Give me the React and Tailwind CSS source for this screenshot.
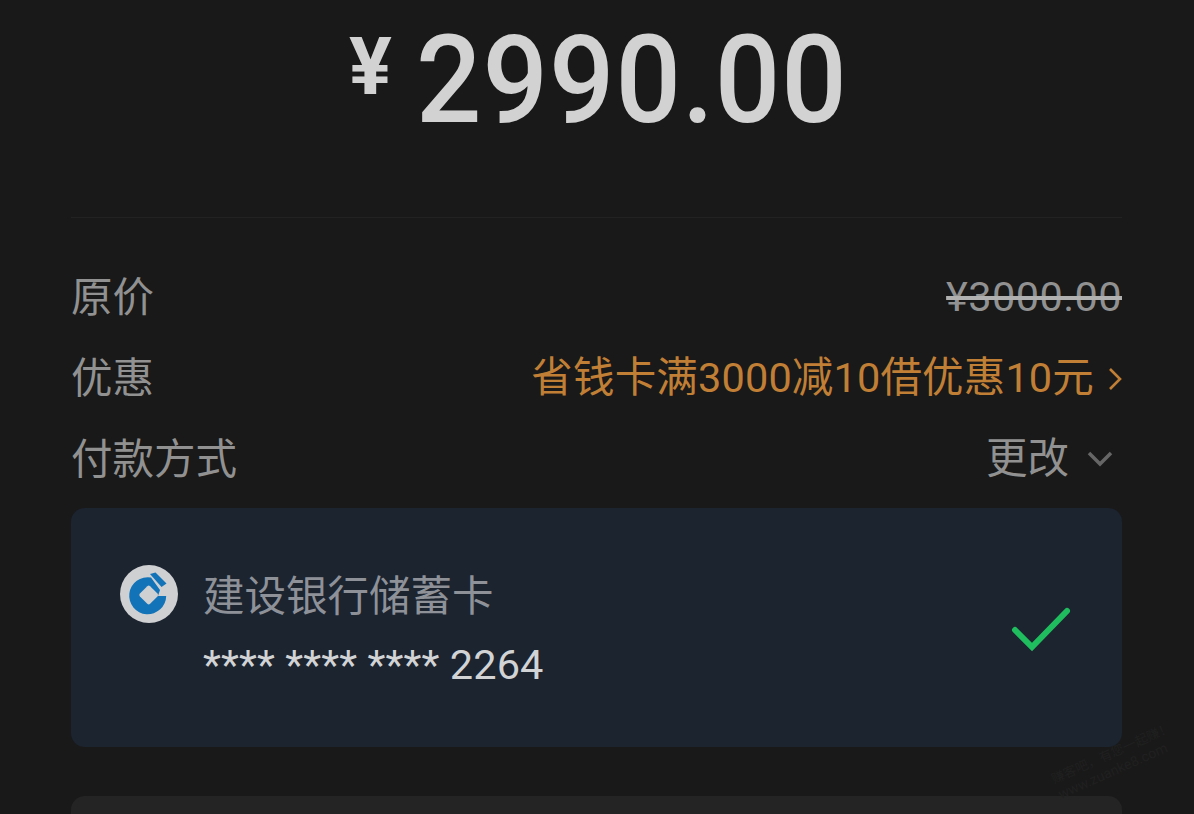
import React from "react";

const FONT = { fontFamily: '"Roboto", "Noto Sans CJK SC", sans-serif' };

function CcbLogo() {
  return (
    <svg viewBox="0 0 58 58" className="w-[58px] h-[58px] shrink-0">
      <circle cx="29" cy="29" r="29" fill="#cfd0d2" />
      <path d="M31 12.5A18.5 18.5 0 1 0 46.2 31L38 31L40 25Z" fill="#1273b8" />
      <path d="M30 9L35.5 7.5L46.5 18.5L41.5 22Z" fill="#1273b8" />
      <rect x="21.5" y="22.8" width="14.4" height="14.4" rx="2" transform="rotate(45 28.7 30)" fill="#cfd0d2" />
    </svg>
  );
}

function Row({ label, children }) {
  return (
    <div className="flex justify-between items-center h-[81px]">
      <span className="text-[41.5px] pt-[2px] text-[#919191]">{label}</span>
      {children}
    </div>
  );
}

export default function App() {
  return (
    <div
      className="relative w-[1194px] h-[814px] overflow-hidden bg-[#191919] pl-[71px] pr-[72px]"
      style={FONT}
    >
      {/* amount */}
      <div className="h-[218px] border-b border-[#222222] pt-[8px] pl-[278px]">
        <div className="flex items-start h-[146px]">
          <span className="text-[80px] font-bold leading-none text-[#d2d2d2] mt-[19px] mr-[24px]">
            ¥
          </span>
          <span className="text-[122px] font-medium leading-[146px] tracking-[1px] text-[#d2d2d2] scale-x-[0.945] origin-left">
            2990.00
          </span>
        </div>
      </div>

      {/* details */}
      <div className="pt-[39px]">
        <Row label="原价">
          <span className="text-[41.5px] tracking-[0.4px] text-[#919191] line-through decoration-[#b0b0b0]">¥3000.00</span>
        </Row>
        <Row label="优惠">
          <span className="flex items-center text-[41.5px] tracking-[0.15px] text-[#c17f36]">
            省钱卡满3000减10借优惠10元
            <svg viewBox="0 0 14 24" className="w-[14px] h-[24px] ml-[14px]" fill="none" stroke="#c17f36" strokeWidth="2.6">
              <path d="M2 2L12 12L2 22" />
            </svg>
          </span>
        </Row>
        <Row label="付款方式">
          <span className="flex items-center text-[41.5px] text-[#919191]">
            更改
            <svg viewBox="0 0 26 16" className="w-[26px] h-[16px] ml-[18px] mr-[9px] mt-[-2px]" fill="none" stroke="#666666" strokeWidth="3.5">
              <path d="M2 2L13 13L24 2" />
            </svg>
          </span>
        </Row>
      </div>

      {/* selected card */}
      <div className="mt-[8px] h-[239px] rounded-[14px] bg-[#1c2430] flex items-center justify-between pl-[49px] pr-[50px]">
        <div className="flex items-start">
          <CcbLogo />
          <div className="ml-[25px] mt-[1.5px] pb-[1px]">
            <div className="text-[41.5px] leading-[61px] text-[#8e9198]">建设银行储蓄卡</div>
            <div className="text-[41.5px] leading-[48px] mt-[14px] tracking-[0.1px] text-[#d2d3d5] whitespace-pre">
              **** **** **** 2264
            </div>
          </div>
        </div>
        <svg viewBox="0 0 62 48" className="w-[62px] h-[48px]" fill="none" stroke="#20bd5e" strokeWidth="6" strokeLinecap="round">
          <path d="M5 26L22 43L57 7" />
        </svg>
      </div>

      {/* next card, cut off by the bottom */}
      <div className="mt-[49px] h-[60px] rounded-[14px] bg-[#242424]" />

      {/* watermark */}
      <div className="absolute left-[1050px] top-[744px] -rotate-[24deg] text-[#202020] leading-[17px] whitespace-nowrap">
        <div className="text-[13px]">赚客吧，有您一起赚！</div>
        <div className="text-[14px]">www.zuanke8.com</div>
      </div>
    </div>
  );
}
